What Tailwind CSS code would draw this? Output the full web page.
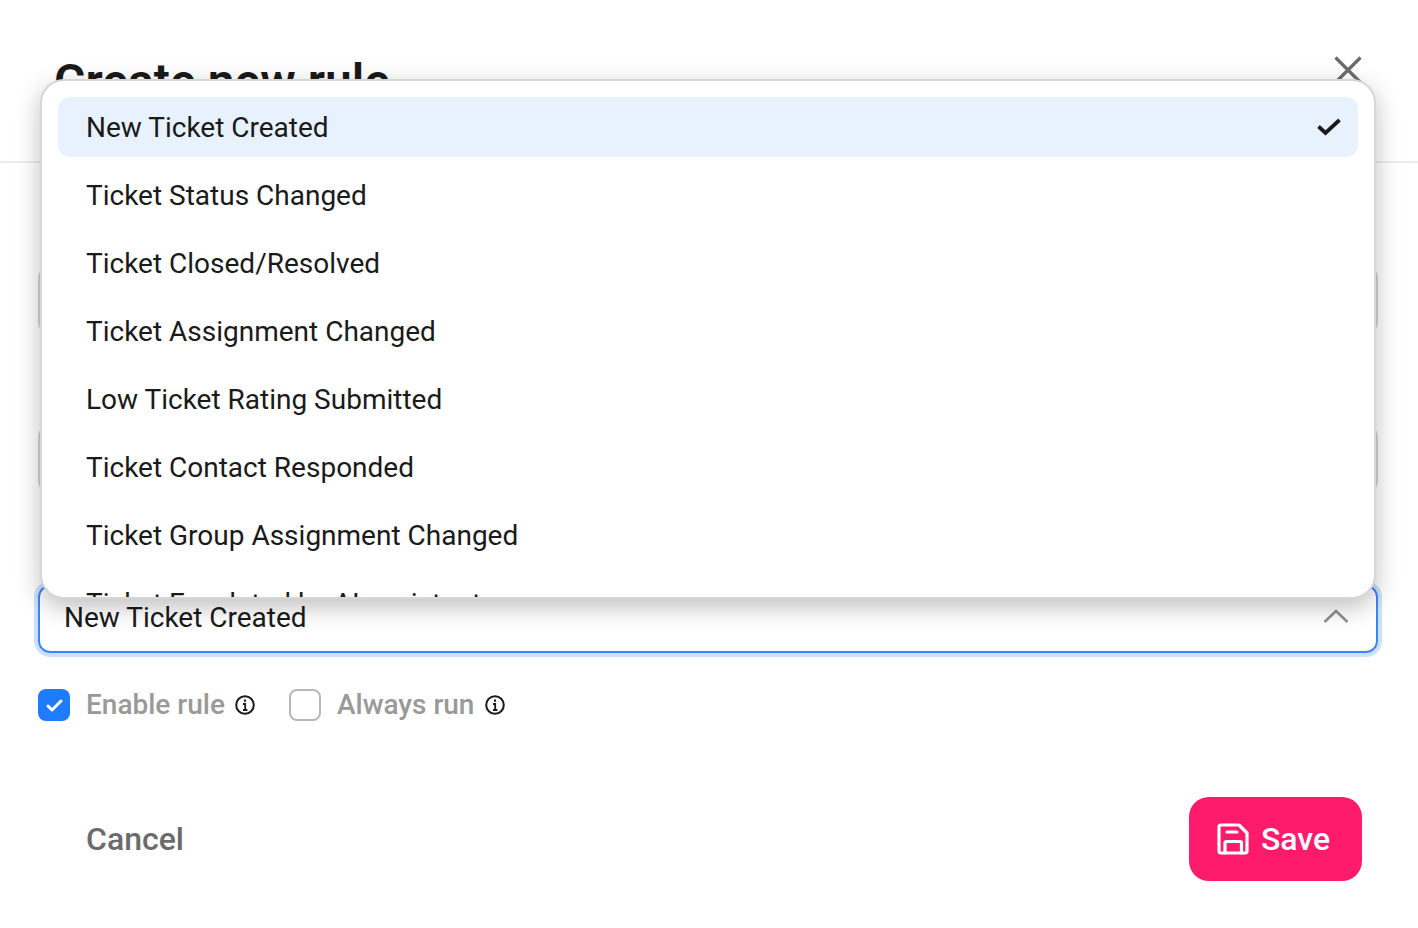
<!DOCTYPE html>
<html lang="en">
  <head>
    <meta charset="UTF-8" />
    <script src="https://cdn.jsdelivr.net/npm/@tailwindcss/browser@4"></script>
    <title>Create new rule</title>
  </head>
  <body class="font-['Roboto',sans-serif] bg-white">
    <div class="relative w-[1418px] h-[928px] overflow-hidden">
      <!-- header -->
      <header class="h-[163px] border-b-2 border-[#ececec] pl-[54px] pr-[56px] pt-[54px] flex justify-between items-start">
        <h1 class="text-[48px] leading-[56px] font-semibold text-[#1a1a1a]">Create new rule</h1>
        <button class="mt-[2px]">
          <svg width="28" height="28" viewBox="0 0 28 28" fill="none" stroke="#6b6b6b" stroke-width="3.2">
            <path d="M1.5 1.5L26.5 26.5M26.5 1.5L1.5 26.5" />
          </svg>
        </button>
      </header>

      <main class="pl-[38px] pr-[40px] flex flex-col">
        <!-- fields under the menu -->
        <div class="mt-[103px] h-[68px] border-2 border-[#d4d4d4] rounded-xl"></div>
        <div class="mt-[91px] h-[68px] border-2 border-[#d4d4d4] rounded-xl"></div>

        <div class="mt-[92px] h-[68px] pb-[2px] border-2 border-[#3b86f6] rounded-xl ring-4 ring-[#cde1fd] pl-[24px] pr-[27px] flex items-center justify-between text-[28px] text-[#1a1a1a]">
          <span>New Ticket Created</span>
          <svg class="mb-[4px]" width="26" height="16" viewBox="0 0 26 16" fill="none" stroke="#8f8f8f" stroke-width="2.6">
            <path d="M1.5 14L13 3L24.5 14" />
          </svg>
        </div>

        <div class="mt-[31px] flex items-center">
          <span class="size-8 rounded-lg bg-[#1f7bff]">
            <svg width="32" height="32" viewBox="0 0 32 32" fill="none" stroke="#fff" stroke-width="3" stroke-linecap="round" stroke-linejoin="round">
              <path d="M10 17L14 21L23 12" />
            </svg>
          </span>
          <span class="ml-[16px] text-[28px] font-medium text-[#999999]">Enable rule</span>
          <svg class="ml-[10px]" width="20" height="20" viewBox="0 0 20 20" fill="none" stroke="#1a1a1a" stroke-width="2">
            <circle cx="10" cy="10" r="8.8" />
            <path d="M8 9H10.2V15M8 15H12.4" stroke-width="1.8" />
            <path d="M9 5.6H11" stroke-width="2.2" />
          </svg>
          <span class="ml-[34px] size-8 rounded-lg border-2 border-[#b8b8b8]"></span>
          <span class="ml-[16px] text-[28px] font-medium text-[#999999]">Always run</span>
          <svg class="ml-[11px]" width="20" height="20" viewBox="0 0 20 20" fill="none" stroke="#1a1a1a" stroke-width="2">
            <circle cx="10" cy="10" r="8.8" />
            <path d="M8 9H10.2V15M8 15H12.4" stroke-width="1.8" />
            <path d="M9 5.6H11" stroke-width="2.2" />
          </svg>
        </div>

        <footer class="mt-[71px] pl-[48px] pr-[16px] flex items-center justify-between">
          <button class="text-[32px] font-medium text-[#6b6b6b]">Cancel</button>
          <button class="w-[173px] h-[84px] pr-1 rounded-[20px] bg-[#ff1b6b] text-white text-[32px] font-medium flex items-center justify-center gap-3">
            <svg width="32" height="32" viewBox="0 0 32 32" fill="none" stroke="#fff" stroke-width="3.2" stroke-linecap="round" stroke-linejoin="round">
              <path d="M4 2H22L30 10V28A2 2 0 0 1 28 30H4A2 2 0 0 1 2 28V4A2 2 0 0 1 4 2Z" />
              <path d="M10 9H20" />
              <path d="M8 30V20A1.5 1.5 0 0 1 9.5 18.5H23A1.5 1.5 0 0 1 24.5 20V30" />
            </svg>
            <span>Save</span>
          </button>
        </footer>
      </main>

      <!-- open menu -->
      <div class="absolute left-[40px] top-[79px] w-[1336px] h-[520px] bg-white border-2 border-[#d6d6d6] rounded-[24px] shadow-[0_8px_24px_rgba(0,0,0,0.25)] overflow-hidden pt-[16px] px-[16px]">
        <ul class="flex flex-col gap-2 text-[28px] text-[#1a1a1a]">
          <li class="h-[60px] pt-[2px] pl-[28px] pr-[17px] rounded-xl bg-[#e8f2ff] flex items-center justify-between">
            <span>New Ticket Created</span>
            <svg class="mb-[2px]" width="24" height="18" viewBox="0 0 24 18" fill="none" stroke="#1a1a1a" stroke-width="3.8">
              <path d="M1.5 8.5L8.5 15L22.5 2" />
            </svg>
          </li>
          <li class="h-[60px] pt-[2px] pl-[28px] flex items-center">Ticket Status Changed</li>
          <li class="h-[60px] pt-[2px] pl-[28px] flex items-center">Ticket Closed/Resolved</li>
          <li class="h-[60px] pt-[2px] pl-[28px] flex items-center">Ticket Assignment Changed</li>
          <li class="h-[60px] pt-[2px] pl-[28px] flex items-center">Low Ticket Rating Submitted</li>
          <li class="h-[60px] pt-[2px] pl-[28px] flex items-center">Ticket Contact Responded</li>
          <li class="h-[60px] pt-[2px] pl-[28px] flex items-center">Ticket Group Assignment Changed</li>
          <li class="h-[60px] pt-[2px] pl-[28px] flex items-center">Ticket Escalated by AI assistant</li>
        </ul>
      </div>
    </div>
  </body>
</html>
